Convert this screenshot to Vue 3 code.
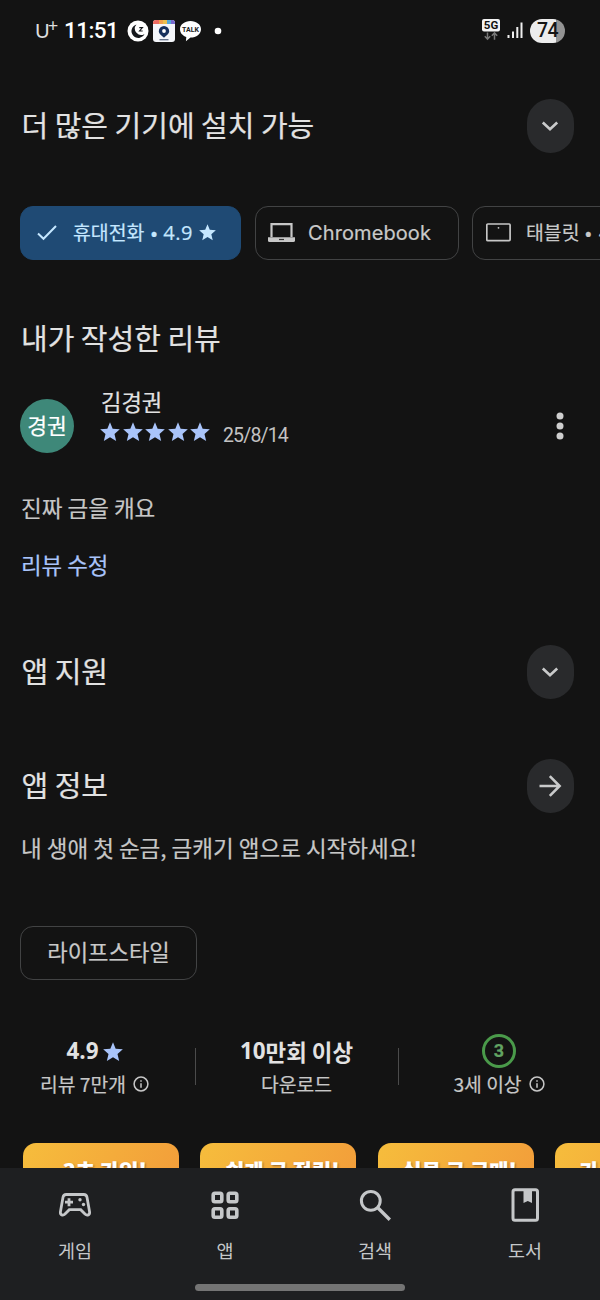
<script setup>
const banners = ['3초 가입!', '쉽게 금 적립!', '실물 금 구매!', '가족 금 선물!']
const star = 'M12 .2l3.200 7.800 8.600.8-6.400 5.600 2 8.400L12 18.300l-7.400 4.500 2-8.400L.2 8.800l8.600-.8z'
</script>

<template>
  <div class="screen">
    <header class="status">
      <span class="carrier">U<sup>+</sup></span>
      <span class="clock">11:51</span>
      <svg class="s-icons" width="96" height="24" viewBox="0 0 96 24">
        <circle cx="11" cy="12" r="10.5" fill="#fff" />
        <path d="M9.500 5.600a6.800 6.800 0 1 0 8 9.300A6.200 6.200 0 0 1 9.500 5.600z" fill="#16181c" />
        <path d="M12.300 8.600h3.200l-3 3.400h3.200" fill="none" stroke="#16181c" stroke-width="1.100" />
        <rect x="26" y="1" width="22" height="22" rx="3" fill="#f4f6fa" />
        <path d="M26 5V4a3 3 0 0 1 3-3h3v4z" fill="#ed6b62" />
        <path d="M32 1h4v4h-4z" fill="#f2a04c" />
        <path d="M36 1h4v4h-4z" fill="#ecc04d" />
        <path d="M40 1h4v4h-4z" fill="#55a8d8" />
        <path d="M44 1h1a3 3 0 0 1 3 3v1h-4z" fill="#7668cf" />
        <path d="M37 7a5.200 5.200 0 0 1 5.200 5.200c0 2.500-3.200 4.500-5.200 6.500-2-2-5.200-4-5.200-6.500A5.200 5.200 0 0 1 37 7z" fill="#16305c" />
        <circle cx="37" cy="12" r="1.900" fill="#fff" />
        <path d="M32.500 20.700h9" stroke="#5d6c85" stroke-width="1.300" />
        <path d="M63.500 2c5.900 0 10.500 3.600 10.500 8.300s-4.600 8.300-10.500 8.300l-4.600 3.600.4-4.200c-3.800-1.300-6.300-4.200-6.300-7.700C53 5.600 57.600 2 63.500 2z" fill="#fff" />
        <text x="63.500" y="12.900" text-anchor="middle" class="talk">TALK</text>
        <circle cx="91" cy="12" r="3.300" fill="#fff" />
      </svg>
      <svg class="signal" width="41" height="24" viewBox="0 0 41 24">
        <rect x="0" y="0" width="18" height="12.500" rx="2" fill="#f3f3f3" />
        <text x="9" y="10.400" text-anchor="middle" class="fiveg">5G</text>
        <path d="M5.500 13.500v6.500M2.800 17.300l2.700 2.900 2.700-2.900M12.500 20.800V14M9.800 16.800l2.700-2.900 2.700 2.900" fill="none" stroke="#777" stroke-width="1.500" />
        <path d="M26.500 16v3M31 12.500v6.500M35.300 8v11M39.500 3.500V19" stroke="#eee" stroke-width="2" />
      </svg>
      <span class="battery">74</span>
    </header>

    <section class="row more">
      <h2>더 많은 기기에 설치 가능</h2>
      <button class="round"><svg width="24" height="24" viewBox="0 0 24 24"><path d="M4.800 8.500L12 15.300l7.200-6.800" /></svg></button>
    </section>

    <div class="chips">
      <div class="chip selected">
        <svg class="check" width="20" height="16" viewBox="0 0 20 16"><path d="M1 8.500l5.500 5.300L19 1" fill="none" stroke="#c5e7ff" stroke-width="2" /></svg>
        <span>휴대전화 <i>•</i> <b>4.9</b></span>
        <svg class="chipstar" width="17" height="17" viewBox="0 0 24 24"><path :d="star" fill="#c5e7ff" /></svg>
      </div>
      <div class="chip chrome">
        <svg width="27" height="20" viewBox="0 0 27 20"><path d="M3.500 14V1.200h20V14" fill="none" stroke="#c7c7c7" stroke-width="2.200" /><path d="M0 14.200h27v3.200q0 1.600-1.600 1.600H1.600Q0 19 0 17.400z" fill="#c7c7c7" /><path d="M11 16.500h5" stroke="#333" stroke-width="1.200" /></svg>
        <span>Chromebook</span>
      </div>
      <div class="chip tablet">
        <svg width="25" height="19" viewBox="0 0 25 19"><rect x=".8" y="1" width="23.300" height="16.600" rx="1" fill="none" stroke="#c7c7c7" stroke-width="1.700" /><circle cx="12.500" cy="4.800" r=".9" fill="#c7c7c7" /></svg>
        <span>태블릿 <i>•</i> <b>4.7</b></span>
      </div>
    </div>

    <h2 class="mine">내가 작성한 리뷰</h2>
    <div class="review">
      <div class="avatar">경권</div>
      <div class="who">
        <div class="name">김경권</div>
        <div class="rating">
          <svg v-for="n in 5" :key="n" width="22.600" height="20" viewBox="0 0 27.120 24"><path :d="star" fill="#a9c4fa" /></svg>
          <span>25/8/14</span>
        </div>
      </div>
      <svg class="dots" width="8" height="28" viewBox="0 0 8 28"><circle cx="4" cy="4" r="3.500" /><circle cx="4" cy="14" r="3.500" /><circle cx="4" cy="24" r="3.500" /></svg>
    </div>
    <p class="text comment">진짜 금을 캐요</p>
    <a class="edit">리뷰 수정</a>

    <section class="row support">
      <h2>앱 지원</h2>
      <button class="round"><svg width="24" height="24" viewBox="0 0 24 24"><path d="M4.800 8.500L12 15.300l7.200-6.800" /></svg></button>
    </section>
    <section class="row info">
      <h2>앱 정보</h2>
      <button class="round"><svg width="24" height="24" viewBox="0 0 24 24"><path d="M1.500 12h20M11.800 2.200l9.800 9.800-9.800 9.800" /></svg></button>
    </section>
    <p class="text about">내 생애 첫 순금, 금캐기 앱으로 시작하세요!</p>
    <div class="tag">라이프스타일</div>

    <div class="stats">
      <div class="stat first">
        <strong><em>4.9</em><svg width="20" height="20" viewBox="0 0 24 24"><path :d="star" fill="#a9c4fa" /></svg></strong>
        <small>리뷰 <em>7</em>만개<svg class="inf" width="16" height="16" viewBox="0 0 16 16"><circle cx="8" cy="8" r="6.900" /><path d="M8 7.200v4.500M8 4.200v1.600" /></svg></small>
      </div>
      <div class="stat second">
        <strong><em class="ten">10</em>만회 이상</strong>
        <small>다운로드</small>
      </div>
      <div class="stat third">
        <div class="age">3</div>
        <small><em>3</em>세 이상<svg class="inf" width="16" height="16" viewBox="0 0 16 16"><circle cx="8" cy="8" r="6.900" /><path d="M8 7.200v4.500M8 4.200v1.600" /></svg></small>
      </div>
    </div>

    <div class="banners">
      <div v-for="b in banners" :key="b" class="banner">{{ b }}</div>
    </div>

    <nav>
      <div class="tabs">
        <div class="tab">
          <svg width="36" height="36" viewBox="0 0 36 36"><path d="M9.200 7.500h17.600q2.700 0 3.200 2.700l2.600 14.700c.4 3-2.500 4.200-4.600 2.200l-4.300-4.400H12.300L8 27.100c-2.100 2-5 .8-4.600-2.200L6 10.200q.5-2.700 3.200-2.700zM12 11.200v8M8 15.200h8" class="ln pad" /><g class="fl"><circle cx="23" cy="12.800" r="1.700" /><circle cx="26.500" cy="17.500" r="1.700" /></g></svg>
          <span>게임</span>
        </div>
        <div class="tab">
          <svg width="36" height="36" viewBox="0 0 36 36"><g class="ln sq"><rect x="6.200" y="6.200" width="8.600" height="8.600" rx="1.700" /><rect x="21.200" y="6.200" width="8.600" height="8.600" rx="1.700" /><rect x="6.200" y="21.700" width="8.600" height="8.600" rx="1.700" /><rect x="21.200" y="21.700" width="8.600" height="8.600" rx="1.700" /></g></svg>
          <span>앱</span>
        </div>
        <div class="tab">
          <svg width="36" height="36" viewBox="0 0 36 36"><g class="ln"><circle cx="13.800" cy="13.800" r="9.400" /><path d="M20.800 20.800l12 12" stroke-width="3.400" /></g></svg>
          <span>검색</span>
        </div>
        <div class="tab">
          <svg width="36" height="36" viewBox="0 0 36 36"><rect x="6" y="2.700" width="24.500" height="30.600" rx="2" class="ln" /><path d="M16.500 2h8.500v14l-4.200-2-4.300 2z" class="fl" /></svg>
          <span>도서</span>
        </div>
      </div>
      <div class="handle"></div>
    </nav>
  </div>
</template>

<style>
html, body { background: #131313; }
</style>

<style scoped>
* { box-sizing: border-box; }
.screen { width: 600px; height: 1300px; overflow: hidden; background: #131313; color: #e2e2e2; font-family: "Noto Sans CJK KR", "Noto Sans", sans-serif; display: flex; flex-direction: column; -webkit-text-stroke: .2px currentColor; }
.screen > * { flex-shrink: 0; }
h2, p { margin: 0; font-weight: 400; }
h2 { font-size: 29px; line-height: 51px; height: 54px; white-space: nowrap; }
i, em { font-style: normal; }
svg { display: block; flex-shrink: 0; -webkit-text-stroke: 0; }

.status { height: 61px; display: flex; align-items: center; padding-left: 35px; color: #fff; -webkit-text-stroke: 0; }
.carrier { width: 29px; margin-top: -2px; font: 20px/24px Lato, sans-serif; color: #ddd; white-space: nowrap; }
.carrier sup { font-size: 18px; line-height: 0; vertical-align: 6px; margin-left: -2px; }
.clock { width: 63px; margin-top: -1px; font: 500 22.500px/24px Roboto, sans-serif; letter-spacing: -.6px; }
.talk { font: bold 7px Roboto, sans-serif; fill: #222; }
.signal { margin-left: auto; }
.fiveg { font: bold 11.500px Roboto, sans-serif; fill: #111; }
.battery { width: 35px; height: 24px; margin: 0 35px 0 7px; border-radius: 12px; background: linear-gradient(90deg, #ececec 74%, #939393 74%); color: #151515; font: 500 19.500px/24px Roboto, sans-serif; text-align: center; letter-spacing: -.5px; }

.row { display: flex; justify-content: space-between; height: 54px; padding: 0 26.500px 0 21.500px; }
.more { margin-top: 38px; }
.round { width: 47px; height: 54px; border: 0; border-radius: 24px; background: #292a2c; display: flex; align-items: center; justify-content: center; padding: 0; }
.round path { fill: none; stroke: #c9cacb; stroke-width: 2.600; }

.chips { display: flex; margin: 53px 0 0 20px; gap: 13.500px; height: 54px; }
.chip { flex-shrink: 0; height: 53.500px; border: 1.500px solid #424344; border-radius: 13px; display: flex; align-items: center; font-size: 19.400px; line-height: 48px; color: #c9c9c9; white-space: nowrap; }
.chip span { height: 50px; }
.chip i { margin: 0 1px; }
.chip b { font: 500 20px "Open Sans", sans-serif; letter-spacing: .6px; }
.selected { width: 221px; background: #1f4a74; border-color: #1f4a74; color: #c5e7ff; padding-left: 16px; }
.selected i { margin: 0 1.500px 0 2px; }
.check { margin-right: 16px; }
.chipstar { margin-left: 6px; }
.chrome { width: 204px; padding-left: 12px; }
.chrome span { margin-left: 13.500px; font: 400 20px/51px Inter, sans-serif; letter-spacing: .1px; }
.tablet { width: 220px; padding-left: 13px; }
.tablet span { margin-left: 15px; }
.tablet i { margin: 0 3px 0 1px; }

.mine { margin: 52px 0 0 21px; }
.review { display: flex; height: 62px; margin-top: 23px; padding-left: 20px; }
.avatar { width: 54px; height: 54px; margin-top: 10px; border-radius: 50%; background: #3e8879; color: #fff; font-size: 21.500px; line-height: 51px; text-align: center; }
.who { margin-left: 26px; }
.name { height: 27px; padding-left: 1px; font-size: 22.200px; line-height: 24px; }
.rating { display: flex; height: 32px; align-items: center; }
.rating span { margin: 7px 0 0 10px; font: 19.500px/24px Roboto, sans-serif; letter-spacing: -.85px; color: #c3c3c3; -webkit-text-stroke: 0; }
.dots { margin: 23px 36px 0 auto; fill: #cfcfcf; }
.text { padding-left: 21px; font-size: 22.500px; line-height: 30px; height: 30px; color: #c7c7c7; white-space: nowrap; }
.comment { margin-top: 41px; }
.edit { margin: 27px 0 0 21px; color: #a9c4fa; font-size: 22.400px; line-height: 30px; height: 30px; }
.support { margin-top: 66px; }
.info { margin-top: 60px; }
.about { margin-top: 19px; }
.tag { width: 177px; height: 54px; margin: 64px 0 0 20px; border: 1.500px solid #424344; border-radius: 13px; font-size: 22.200px; line-height: 48px; text-align: center; color: #c9c9c9; }

.stats { display: flex; height: 76px; margin-top: 50px; }
.stat { position: relative; display: flex; flex-direction: column; align-items: center; padding-top: 4px; }
.stat strong { display: flex; align-items: center; height: 34px; font-size: 22.400px; line-height: 32px; padding-bottom: 0; font-weight: 700; white-space: pre; -webkit-text-stroke: 0; }
.stat strong em { font-family: "Open Sans", sans-serif; font-weight: 700; }
.stat strong svg { margin: 2px 0 0 4px; }
.stat small { display: flex; align-items: center; height: 32px; font-size: 19.300px; line-height: 32px; color: #c7c7c7; white-space: pre; }
.first { width: 195px; padding-right: 6px; }
.second { width: 203px; }
.third { width: 202px; }
.second::before, .third::before { content: ""; position: absolute; left: 0; top: 18px; width: 1px; height: 37px; background: #4b4b4b; }
.age { width: 34px; height: 34px; border: 3px solid #4a9a4a; border-radius: 50%; color: #62a362; font: bold 18px/28px Roboto, sans-serif; text-align: center; }
.inf { margin-left: 7px; fill: none; stroke: #c7c7c7; stroke-width: 1.500; }

.banners { display: flex; gap: 21.300px; height: 25px; margin: 37px 0 0 23px; overflow: hidden; }
.banner { width: 156px; height: 70px; flex-shrink: 0; border-radius: 13px; background: linear-gradient(120deg, #f6bd3c, #f29a3a); color: #fff; font-size: 21px; line-height: 30px; font-weight: 900; padding: 12px 0 0 8px; text-align: center; text-shadow: 1px 1px 2px #9b6426; white-space: nowrap; }

nav { height: 132px; background: #1e1f21; color: #c5c7c9; }
.tabs { display: flex; padding-top: 19px; height: 116px; }
.tab { width: 150px; display: flex; flex-direction: column; align-items: center; }
.tab span { margin-top: 13px; font-size: 18.500px; line-height: 28px; -webkit-text-stroke: 0; }
.ln { fill: none; stroke: #c5c7c9; stroke-width: 3; }
.pad { stroke-width: 2.800; }
.sq { stroke-width: 3.600; }
.fl { fill: #c5c7c9; }
.handle { width: 210px; height: 7px; margin: 0 auto; border-radius: 4px; background: #747474; }
</style>
